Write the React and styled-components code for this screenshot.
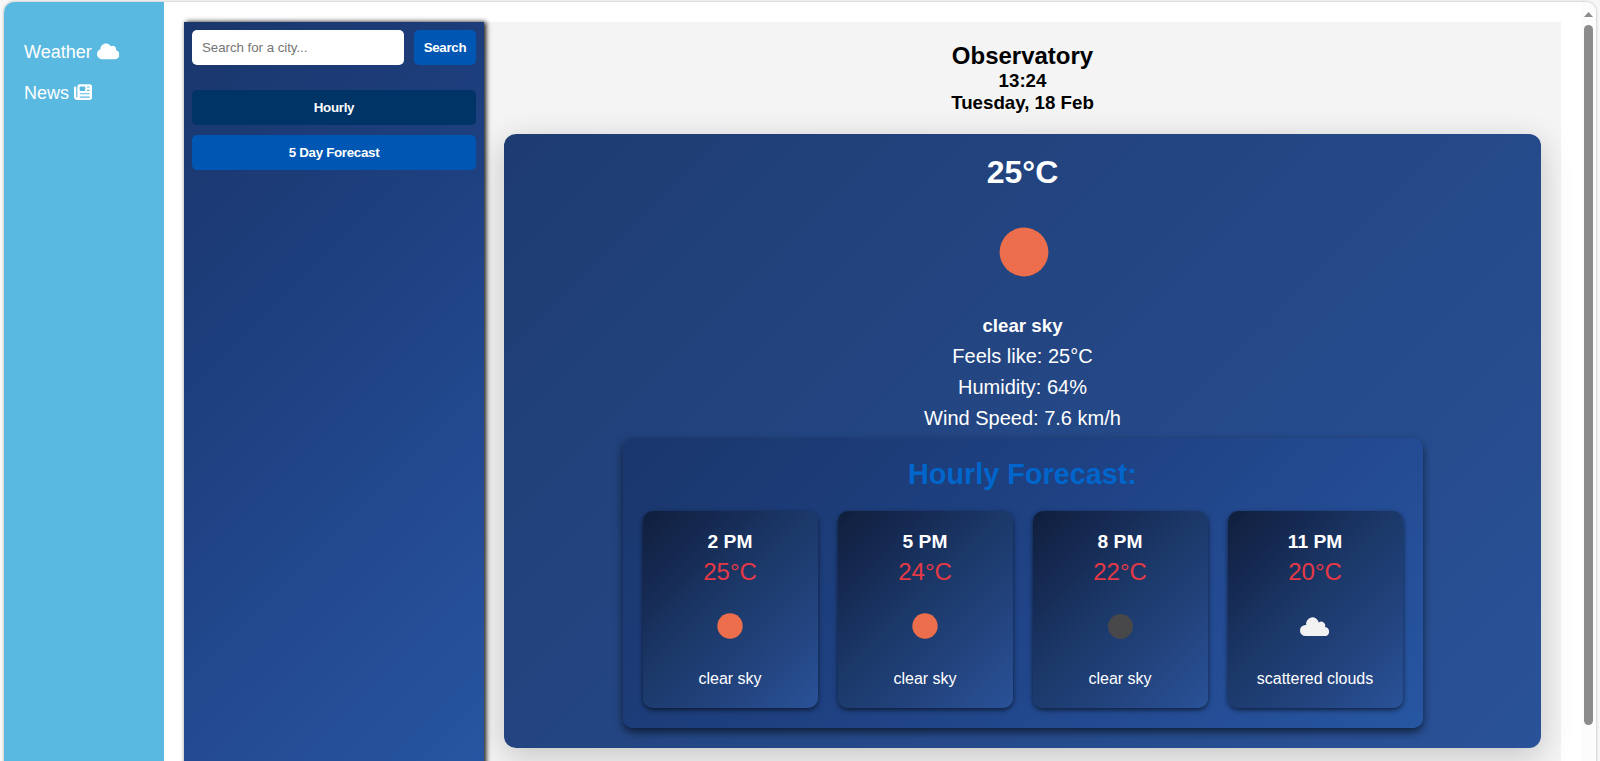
import React from 'react';
import styled, { createGlobalStyle } from 'styled-components';
import { FaCloud, FaNewspaper } from 'react-icons/fa6';

const Global = createGlobalStyle`
  * { box-sizing: border-box; margin: 0; padding: 0; }
  body { background: #f7f7f7; font-family: Arial, "Liberation Sans", sans-serif; overflow: hidden; }
`;

const Frame = styled.div`
  display: flex;
  width: 1592px;
  height: 771px;
  margin: 2px 0 0 4px;
  background: #fff;
  border-radius: 10px;
  overflow: hidden;
  box-shadow: 0 0 3px rgba(0, 0, 0, 0.3);
`;
const Stage = styled.div`height: 761px; overflow: hidden;`;

const Sidebar = styled.nav`
  width: 160px;
  flex: none;
  padding: 40px 20px;
  background: #5ab9e0;
`;
const NavLink = styled.div`
  display: flex;
  align-items: center;
  gap: 5px;
  height: 21px;
  margin-bottom: 20px;
  color: #fff;
  font-size: 18px;
  line-height: 21px;
  svg { margin-bottom: 3px; }
`;

const Main = styled.main`
  display: flex;
  flex: 1;
  padding: 20px 20px 0;
  overflow: hidden;
`;
const Controls = styled.aside`
  position: relative;
  z-index: 1;
  width: 300px;
  flex: none;
  padding: 8px;
  background: linear-gradient(135deg, #1a366c, #1e4080 40%, #244c94 75%, #2756a2);
  box-shadow: 2px 0 5px rgba(0, 0, 0, 0.95);
`;
const SearchRow = styled.form`
  display: flex;
  gap: 10px;
  margin-bottom: 25px;
`;
const SearchInput = styled.input`
  width: 212px;
  height: 35px;
  padding: 0 10px;
  border: 0;
  border-radius: 5px;
  background: #fff;
  font: 13.333px Arial, "Liberation Sans", sans-serif;
  &::placeholder { color: #757575; letter-spacing: -0.05px; }
`;
const Button = styled.button`
  display: block;
  width: ${(p) => p.$width || '100%'};
  height: 35px;
  margin-bottom: ${(p) => p.$gap || 0};
  border: 0;
  border-radius: 5px;
  background: ${(p) => (p.$active ? '#003366' : '#0056b3')};
  color: #fff;
  font: bold 13.333px Arial, "Liberation Sans", sans-serif;
  letter-spacing: -0.3px;
`;

const Content = styled.section`
  flex: 1;
  padding: 20px;
  background: #f4f4f4;
`;
const Heading = styled.header`
  height: 92px;
  text-align: center;
  color: #000;
`;
const City = styled.h2`font-size: 24px; line-height: 28px;`;
const Stamp = styled.h3`font-size: 18.72px; line-height: 22px;`;

const Current = styled.div`
  display: flex;
  flex-direction: column;
  align-items: center;
  height: 614px;
  padding: 20px;
  border-radius: 12px;
  background: linear-gradient(135deg, #1e3c72, #2a5298);
  box-shadow: 0 8px 32px rgba(0, 0, 0, 0.2);
  color: #fff;
`;
const Temperature = styled.h1`font-size: 32px; line-height: 36px;`;
const SkyIcon = styled.svg`
  display: block;
  width: ${(p) => p.$size}px;
  height: ${(p) => p.$size}px;
`;
const CurrentIcon = styled.div`margin: 12px 0 8px 2px;`;
const Condition = styled.h3`font-size: 18.72px; line-height: 31px;`;
const Detail = styled.p`font-size: 20px; line-height: 31px;`;

const Forecast = styled.div`
  width: 800px;
  height: 290px;
  margin-top: 4px;
  padding: 20px;
  border-radius: 10px;
  background: linear-gradient(135deg, #1a366c, #1e4080 40%, #244c94 75%, #2756a2);
  box-shadow: 0 4px 8px rgba(0, 0, 0, 0.6);
  text-align: center;
`;
const ForecastTitle = styled.h2`
  height: 53px;
  color: #0066cc;
  font-size: 28.8px;
  line-height: 33px;
`;
const HourGrid = styled.div`
  display: grid;
  grid-template-columns: repeat(4, 1fr);
  gap: 20px;
`;
const HourCard = styled.article`
  display: flex;
  flex-direction: column;
  align-items: center;
  height: 197px;
  padding-top: 19px;
  border-radius: 10px;
  background: linear-gradient(135deg, #0f1f3c, #152850 20%, #1b3868 45%, #22427c 70%, #2a5298);
  box-shadow: 0 2px 5px rgba(0, 0, 0, 0.6);
`;
const Hour = styled.strong`font-size: 19.2px; line-height: 24px;`;
const HourTemp = styled.span`
  margin-top: 4px;
  color: #e63946;
  font-size: 24px;
  line-height: 28px;
`;
const HourIcon = styled.div`margin: 15px 0 19px;`;
const HourText = styled.span`font-size: 16px; line-height: 18px;`;

const ScrollTrack = styled.div`
  display: flex;
  flex-direction: column;
  align-items: center;
  width: 15px;
  flex: none;
  padding-top: 10px;
  background: #fcfcfc;
`;
const ArrowUp = styled.svg`display: block; width: 9px; height: 5px;`;
const Thumb = styled.div`
  width: 9px;
  height: 700px;
  margin-top: 8px;
  border-radius: 5px;
  background: #8b8b8b;
`;

function Sky({ kind, size }) {
  return (
    <SkyIcon $size={size} viewBox="0 0 100 100">
      {kind === 'sun' && <circle cx="50" cy="50" r={size > 60 ? 24.4 : 25.4} fill="#ec6e4c" />}
      {kind === 'moon' && <circle cx="51" cy="51" r="25" fill="#48484a" />}
      {kind === 'cloud' && (
        <path
          fill="#f2f2f2"
          d="M31 70A11 11 0 0 1 31 48L32.500 48A12.500 12.500 0 0 1 57.500 43A8 8 0 0 1 70 52A9.200 9.200 0 0 1 71.500 70Z"
        />
      )}
    </SkyIcon>
  );
}

const hours = [
  { time: '2 PM', temp: '25°C', kind: 'sun', text: 'clear sky' },
  { time: '5 PM', temp: '24°C', kind: 'sun', text: 'clear sky' },
  { time: '8 PM', temp: '22°C', kind: 'moon', text: 'clear sky' },
  { time: '11 PM', temp: '20°C', kind: 'cloud', text: 'scattered clouds' },
];

export default function App() {
  return (
    <Stage>
      <Global />
      <Frame>
        <Sidebar>
          <NavLink>Weather <FaCloud size="1.25em" /></NavLink>
          <NavLink>News <FaNewspaper size="1em" /></NavLink>
        </Sidebar>
        <Main>
          <Controls>
            <SearchRow>
              <SearchInput placeholder="Search for a city..." />
              <Button type="button" $width="62px">Search</Button>
            </SearchRow>
            <Button $active $gap="10px">Hourly</Button>
            <Button>5 Day Forecast</Button>
          </Controls>
          <Content>
            <Heading>
              <City>Observatory</City>
              <Stamp>13:24</Stamp>
              <Stamp>Tuesday, 18 Feb</Stamp>
            </Heading>
            <Current>
              <Temperature>25°C</Temperature>
              <CurrentIcon><Sky kind="sun" size={100} /></CurrentIcon>
              <Condition>clear sky</Condition>
              <Detail>Feels like: 25°C</Detail>
              <Detail>Humidity: 64%</Detail>
              <Detail>Wind Speed: 7.6 km/h</Detail>
              <Forecast>
                <ForecastTitle>Hourly Forecast:</ForecastTitle>
                <HourGrid>
                  {hours.map((h) => (
                    <HourCard key={h.time}>
                      <Hour>{h.time}</Hour>
                      <HourTemp>{h.temp}</HourTemp>
                      <HourIcon><Sky kind={h.kind} size={50} /></HourIcon>
                      <HourText>{h.text}</HourText>
                    </HourCard>
                  ))}
                </HourGrid>
              </Forecast>
            </Current>
          </Content>
        </Main>
        <ScrollTrack>
          <ArrowUp viewBox="0 0 9 5"><path d="M4.500 0L9 5H0Z" fill="#8b8b8b" /></ArrowUp>
          <Thumb />
        </ScrollTrack>
      </Frame>
    </Stage>
  );
}
